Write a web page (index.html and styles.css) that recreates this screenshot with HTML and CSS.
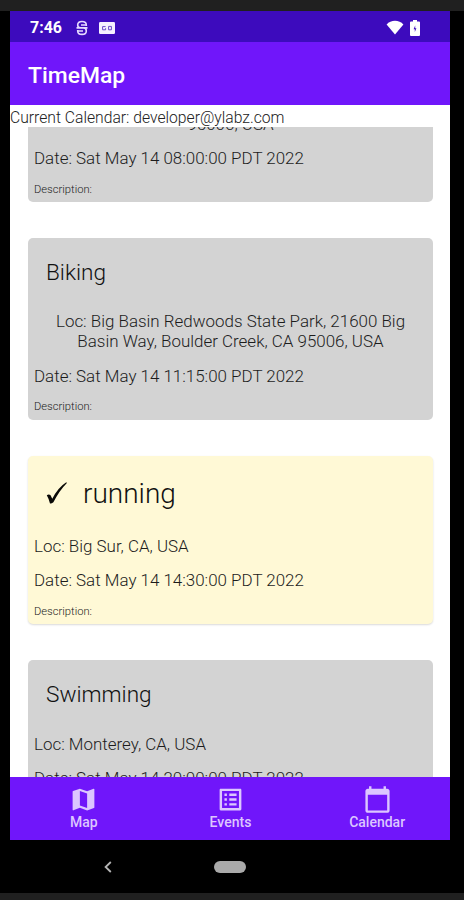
FILE: index.html
```html
<!DOCTYPE html>
<html lang="en">
<head>
<meta charset="utf-8">
<title>TimeMap</title>
<link rel="stylesheet" href="styles.css">
</head>
<body>
<div class="phone">
  <div class="screen">
    <div class="status">
      <span class="clock">7:46</span>
      <svg class="s-icon" viewBox="0 0 12 16" width="12" height="16" fill="none" stroke="#e6dcff" stroke-width="1.6"><path d="M10.3 6V5Q10.3 1.5 6 1.5Q1.7 1.5 1.7 5Q1.7 7.9 4.5 7.9H7.5Q10.3 7.9 10.3 11Q10.3 14.4 6 14.4Q1.7 14.4 1.7 11V10M.5 7.9H11.5M5 5H10.3M1.7 11H7"/></svg>
      <svg class="card-icon" viewBox="0 0 16 12" width="16" height="12"><rect width="16" height="12" rx="1.2" fill="#f5f0ff"/><path d="M6.6 4.6H3.6V7.8H6.6V6.2M9.6 4.4H12.4V7.8H9.6Z" fill="none" stroke="#6a48c8" stroke-width="1"/></svg>
      <svg class="wifi" viewBox="0 0 18 15" width="18" height="15"><path d="M9 14.5L.6 4.4Q4 .8 9 .8T17.4 4.4Z" fill="#fff"/></svg>
      <svg class="battery" viewBox="0 0 10 16" width="10" height="16"><path d="M3 0H7V1.6H9Q10 1.6 10 2.6V15Q10 16 9 16H1Q0 16 0 15V2.6Q0 1.6 1 1.6H3Z" fill="#fff"/><path d="M5.2 5.5L3.6 9.2H4.8V12L6.4 8.3H5.2Z" fill="#3d0bbd"/></svg>
    </div>
    <header class="appbar"><h1>TimeMap</h1></header>
    <p class="current">Current Calendar: developer@ylabz.com</p>
    <main class="list">
      <article class="card card-first">
        <p class="loc multi">95006, USA</p>
        <p class="line">Date: Sat May 14 08:00:00 PDT 2022</p>
        <p class="desc">Description:</p>
      </article>
      <article class="card">
        <h2>Biking</h2>
        <p class="loc multi">Loc: Big Basin Redwoods State Park, 21600 Big<br>Basin Way, Boulder Creek, CA 95006, USA</p>
        <p class="line">Date: Sat May 14 11:15:00 PDT 2022</p>
        <p class="desc">Description:</p>
      </article>
      <article class="card active">
        <h2><svg viewBox="0 0 22 24" width="22" height="24"><path d="M.8 14.3Q2.6 12.7 4.4 14L6.3 17.7Q12 6.5 20.3 1.2L20.9 1.9Q13.2 9.6 7.4 21.3Q5.3 22.8 4 22.4Q2.8 17.8.8 14.3Z" fill="#090906"/></svg><span>running</span></h2>
        <p class="line">Loc: Big Sur, CA, USA</p>
        <p class="line">Date: Sat May 14 14:30:00 PDT 2022</p>
        <p class="desc">Description:</p>
      </article>
      <article class="card card-last">
        <h2>Swimming</h2>
        <p class="line">Loc: Monterey, CA, USA</p>
        <p class="line">Date: Sat May 14 20:00:00 PDT 2022</p>
      </article>
    </main>
    <nav class="tabs">
      <a><svg viewBox="0 0 24 24" width="29" height="29"><path fill="currentColor" d="M20.5 3l-.16.03L15 5.1 9 3 3.36 4.9c-.21.07-.36.25-.36.48V20.5c0 .28.22.5.5.5l.16-.03L9 18.9l6 2.1 5.64-1.9c.21-.07.36-.25.36-.48V3.5c0-.28-.22-.5-.5-.5zM15 19l-6-2.11V5l6 2.11V19z"/></svg><span>Map</span></a>
      <a><svg viewBox="0 0 24 24" width="29" height="29"><path fill="currentColor" d="M19 5v14H5V5h14m1.1-2H3.9c-.5 0-.9.4-.9.9v16.2c0 .4.4.9.9.9h16.2c.4 0 .9-.5.9-.9V3.9c0-.5-.5-.9-.9-.9zM11 7h6v2h-6V7zm0 4h6v2h-6v-2zm0 4h6v2h-6v-2zM7 7h2v2H7V7zm0 4h2v2H7v-2zm0 4h2v2H7v-2z"/></svg><span>Events</span></a>
      <a><svg viewBox="0 0 24 24" width="29" height="29"><path fill="currentColor" d="M20 3h-1V1h-2v2H7V1H5v2H4c-1.1 0-2 .9-2 2v16c0 1.1.9 2 2 2h16c1.1 0 2-.9 2-2V5c0-1.1-.9-2-2-2zm0 18H4V8h16v13z"/></svg><span>Calendar</span></a>
    </nav>
  </div>
  <div class="system">
    <svg class="back" viewBox="0 0 8 12" width="8" height="12"><path d="M6.8 1L1.6 6L6.8 11" fill="none" stroke="#b5b5b5" stroke-width="1.8"/></svg>
    <i class="pill"></i>
  </div>
</div>
</body>
</html>
```
FILE: styles.css
```css
* { box-sizing: border-box; margin: 0; padding: 0; }
body {
  width: 464px; height: 900px; overflow: hidden;
  padding: 11px 0 7px;
  background: #202020;
  font-family: Roboto, "Liberation Sans", sans-serif;
}
.phone { height: 882px; padding: 0 14px 0 10px; background: #000; }
.screen { height: 829px; display: flex; flex-direction: column; background: #fff; }
.status {
  height: 31px; padding: 2px 30px 0 20px;
  display: flex; align-items: center;
  background: #3d0bbd; color: #fff;
}
.clock { width: 46px; font-size: 16px; font-weight: 700; }
.card-icon { margin-left: 11px; }
.wifi { margin-left: auto; margin-right: 6px; }
.appbar { height: 63px; padding: 4px 0 0 18px; display: flex; align-items: center; background: #7016fa; color: #fff; }
.appbar h1 { font-size: 22.9px; font-weight: 500; }
.current { height: 22px; line-height: 25px; font-size: 15.7px; font-weight: 300; color: #222; }
.list { flex: 1; min-height: 0; overflow: hidden; padding: 0 17px 0 18px; display: flex; flex-direction: column; gap: 36px; }
.card { flex: none; height: 182px; padding: 10px 6px 0; border-radius: 5px; background: #d3d3d3; color: #1c1c1c; }
.card-first { height: 87px; margin-top: -12px; padding-top: 0; border-radius: 0 0 5px 5px; }
.card h2 { height: 48px; padding-left: 12px; display: flex; align-items: center; font-size: 22.6px; font-weight: 300; color: #111; }
.loc, .line { font-size: 16.95px; font-weight: 300; white-space: nowrap; }
.multi { padding: 16px 0 8px; line-height: 19.5px; text-align: center; }
.card-first .multi { padding: 0 0 6px; }
.card-first .desc { padding-top: 1px; }
.line { height: 34px; line-height: 34px; }
.desc { height: 26px; line-height: 27px; font-size: 11.2px; font-weight: 300; }
.active { height: 168px; background: #fff9d6; box-shadow: 0 1px 2px rgba(0,0,0,.15); }
.active h2 { height: 54px; margin-bottom: 9px; gap: 15px; font-size: 28px; }
.active .desc { padding-top: 1px; }
.card-last h2 { height: 49px; margin-bottom: 8px; }
.tabs { height: 63px; padding: 8px 0 0; display: grid; grid-template-columns: repeat(3, 1fr); background: #7016fa; color: #dcc6ff; }
.tabs a { display: flex; flex-direction: column; align-items: center; padding-left: 1px; font-size: 14px; font-weight: 500; line-height: 16px; }
.system { height: 53px; padding: 1px 0 0 94px; display: flex; align-items: center; }
.pill { width: 32px; height: 12px; margin-left: 102px; border-radius: 6px; background: #aaa; }
```
